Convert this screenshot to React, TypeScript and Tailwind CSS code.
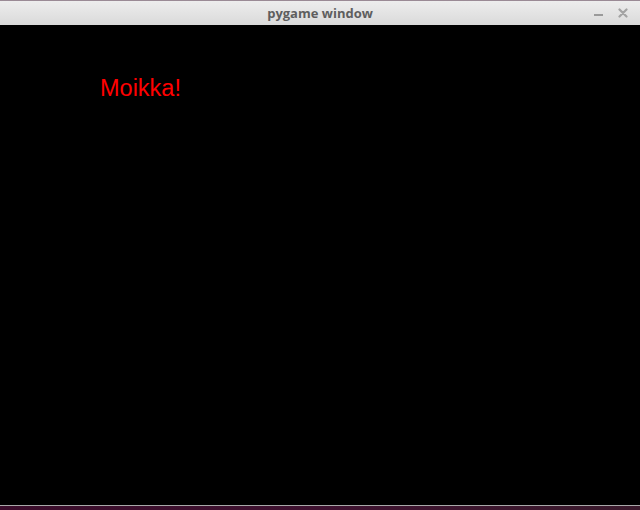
export default function App() {
  return (
    <div className="flex h-[510px] w-[640px] flex-col overflow-hidden bg-[#2e0c22]">
      {/* title bar */}
      <div className="relative flex h-[25px] shrink-0 items-center justify-center border-t border-[#9a8a95] bg-gradient-to-b from-[#ededed] to-[#dadada]">
        <span className="font-['Open_Sans',sans-serif] text-[13px] font-bold leading-none text-[#5e5e5e]">
          pygame window
        </span>
        <div className="absolute right-[12px] top-0 flex h-full items-center gap-[15px]">
          <span className="mt-[3px] block h-[2px] w-[9px] bg-[#9a9a9a]" />
          <svg width="10" height="10" viewBox="0 0 10 10">
            <path d="M1.5 1.5 L8.5 8.5 M8.5 1.5 L1.5 8.5" stroke="#a3a3a3" strokeWidth="2.2" strokeLinecap="round" />
          </svg>
        </div>
      </div>

      {/* game surface */}
      <div className="h-[480px] shrink-0 bg-black pl-[100px] pt-[51px]">
        <p className="font-['Liberation_Sans',Arial,sans-serif] text-[23.5px] leading-[24px] text-[#ff0000]">
          Moikka!
        </p>
      </div>
      <div className="h-px shrink-0 bg-[#a8a8a8]" />
      <div className="flex-1 bg-gradient-to-r from-[#3b0d2b] via-[#3f1230] to-[#3a1a2c]" />
    </div>
  );
}
